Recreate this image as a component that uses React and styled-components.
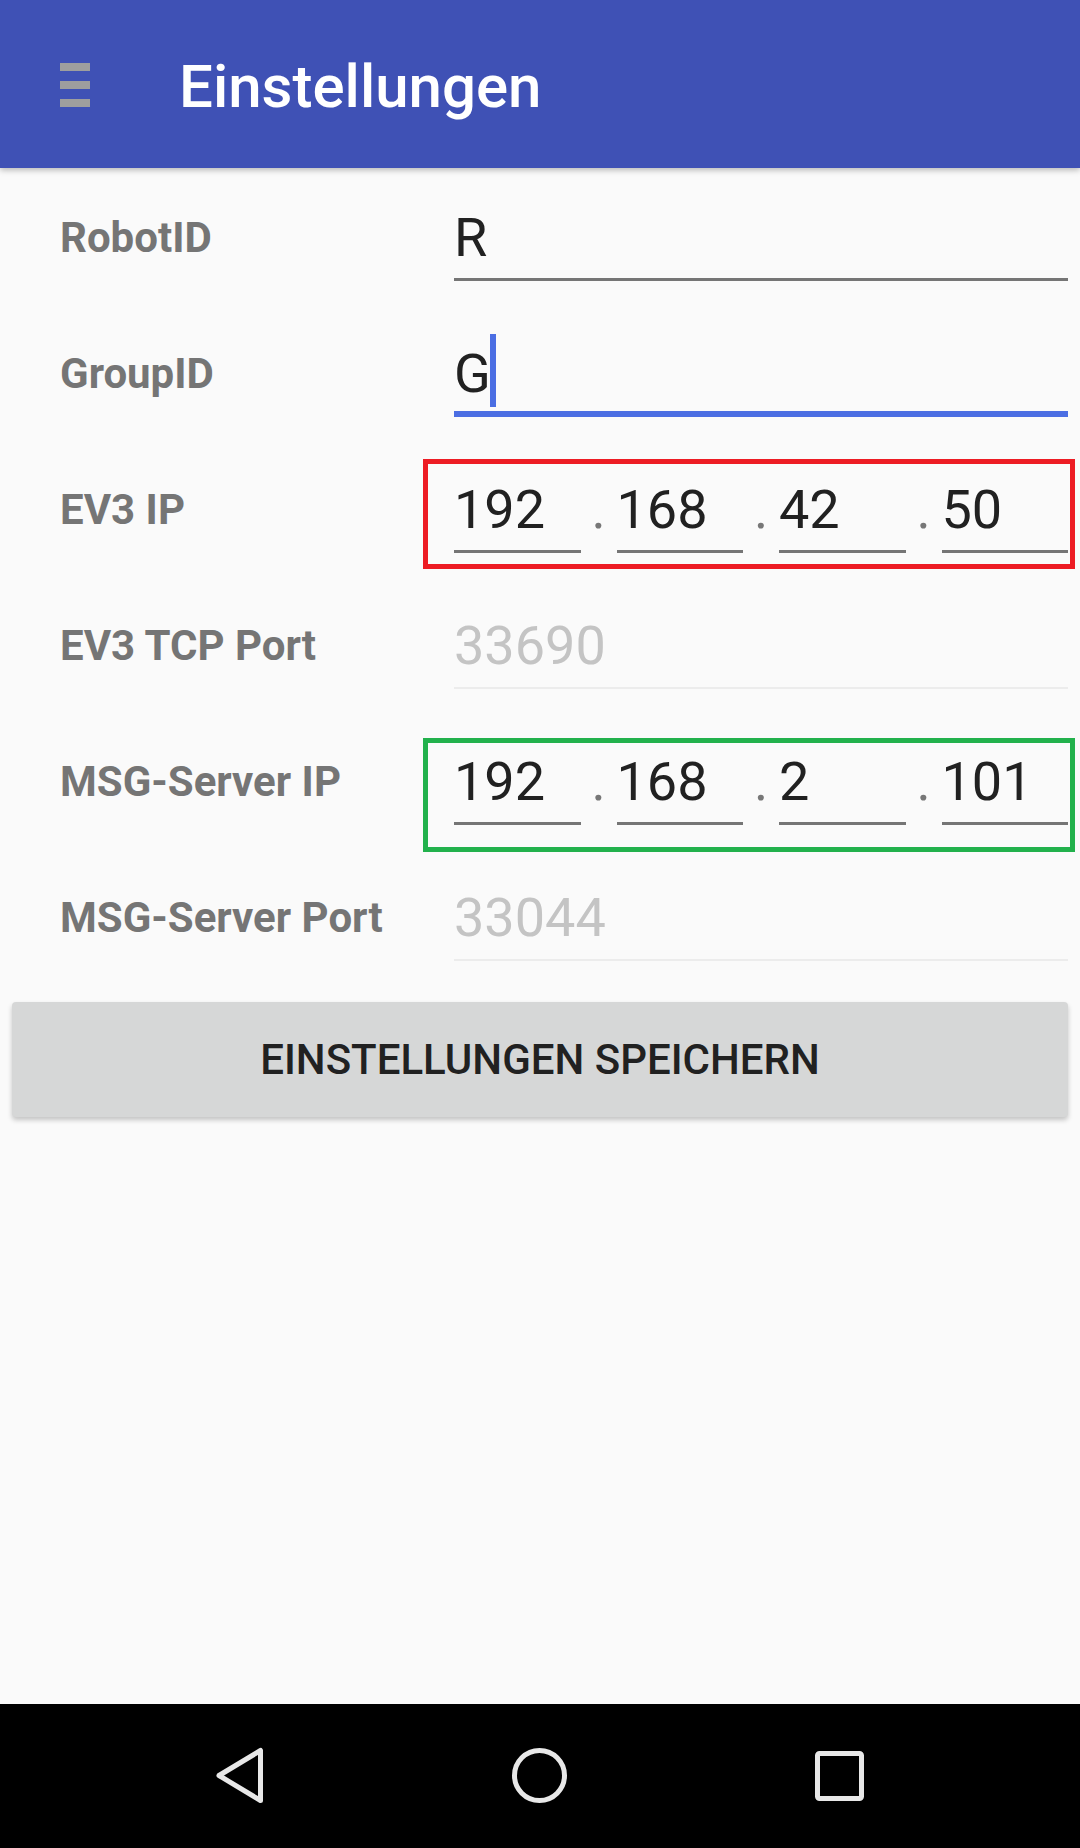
import React from 'react';
import styled, { createGlobalStyle } from 'styled-components';

const GlobalStyle = createGlobalStyle`
    html, body {
        margin: 0;
        padding: 0;
        background: #fafafa;
    }
    *, *::before, *::after { box-sizing: border-box; }
`;

const rows = [
    { label: 'RobotID', value: 'R' },
    { label: 'GroupID', value: 'G', focused: true },
    { label: 'EV3 IP', ip: ['192', '168', '42', '50'], frame: '#ed1c24', frameTop: 19, frameHeight: 110 },
    { label: 'EV3 TCP Port', hint: '33690' },
    { label: 'MSG-Server IP', ip: ['192', '168', '2', '101'], frame: '#22b14c', frameTop: 26, frameHeight: 114 },
    { label: 'MSG-Server Port', hint: '33044' },
];

const Settings = () => {
    return (
        <Page>
            <GlobalStyle />
            <AppBar>
                <MenuIcon>
                    <span />
                    <span />
                    <span />
                </MenuIcon>
                <Title>Einstellungen</Title>
            </AppBar>

            <Content>
                {rows.map((row) => (
                    <Row key={row.label}>
                        <Label>{row.label}</Label>
                        {row.ip ? (
                            <IpGroup $frame={row.frame} $frameTop={row.frameTop} $frameHeight={row.frameHeight}>
                                {row.ip.map((part, i) => (
                                    <React.Fragment key={i}>
                                        {i > 0 && <Dot>.</Dot>}
                                        <Field>{part}</Field>
                                    </React.Fragment>
                                ))}
                            </IpGroup>
                        ) : row.hint ? (
                            <Field $hint>{row.hint}</Field>
                        ) : (
                            <Field $focused={row.focused}>
                                {row.value}
                                {row.focused && <Cursor />}
                            </Field>
                        )}
                    </Row>
                ))}

                <SaveButton>Einstellungen speichern</SaveButton>
            </Content>

            <NavBar>
                {/* back */}
                <NavIcon viewBox="0 0 60 60">
                    <path d="M50.5 4.5 L50.5 54.5 L9 29.5 Z" fill="none" stroke="#e8e8e8" strokeWidth="5" strokeLinejoin="round" />
                </NavIcon>
                {/* home */}
                <NavIcon viewBox="0 0 60 60">
                    <circle cx="29.5" cy="29.5" r="25" fill="none" stroke="#e8e8e8" strokeWidth="5" />
                </NavIcon>
                {/* recents */}
                <NavIcon viewBox="0 0 60 60">
                    <rect x="7.5" y="7.5" width="44" height="45" rx="2" fill="none" stroke="#e8e8e8" strokeWidth="5" />
                </NavIcon>
            </NavBar>
        </Page>
    );
};

const Page = styled.div`
    height: 100vh;
    display: flex;
    flex-direction: column;
    background: #fafafa;
    font-family: Roboto, 'Noto Sans', sans-serif;
    overflow: hidden;
`;

const AppBar = styled.header`
    height: 168px;
    flex-shrink: 0;
    background: #3f51b5;
    display: flex;
    align-items: center;
    padding-left: 60px;
    box-shadow: 0 2px 6px rgba(0, 0, 0, 0.28);
    position: relative;
    z-index: 2;
`;

const MenuIcon = styled.div`
    width: 30px;
    display: flex;
    flex-direction: column;
    gap: 10px;
    margin-top: 2px;

    span {
        display: block;
        height: 8px;
        background: #9e9e9e;
    }
`;

const Title = styled.h1`
    margin: 5px 0 0 89px;
    font-size: 60px;
    line-height: 60px;
    font-weight: 500;
    color: #fff;
`;

const Content = styled.main`
    flex: 1;
    display: flex;
    flex-direction: column;
`;

const Row = styled.div`
    height: 136px;
    display: flex;
    align-items: flex-start;
    padding: 0 12px 0 60px;
`;

const Label = styled.div`
    width: 394px;
    flex-shrink: 0;
    margin-top: 49px;
    font-size: 42px;
    line-height: 42px;
    font-weight: 700;
    color: #757575;
    white-space: nowrap;
`;

const Field = styled.div`
    position: relative;
    flex: 1;
    min-width: 0;
    height: 113px;
    padding-top: 43px;
    font-size: 54px;
    line-height: 54px;
    color: ${props => props.$hint ? '#c4c4c4' : '#212121'};
    border-bottom: ${props =>
        props.$focused ? '6px solid #4b6ee3'
        : props.$hint ? '2px solid #ececec'
        : '3px solid #757575'};
    white-space: nowrap;
`;

const Cursor = styled.span`
    position: absolute;
    left: 36px;
    top: 30px;
    width: 6px;
    height: 73px;
    background: #4b6ee3;
`;

const IpGroup = styled.div`
    position: relative;
    flex: 1;
    display: flex;
    align-items: flex-start;

    &::after {
        content: '';
        position: absolute;
        left: -31px;
        right: -7px;
        top: ${props => props.$frameTop}px;
        height: ${props => props.$frameHeight}px;
        border: 5px solid ${props => props.$frame};
        pointer-events: none;
    }
`;

const Dot = styled.span`
    width: 36px;
    flex-shrink: 0;
    padding-top: 43px;
    font-size: 54px;
    line-height: 54px;
    text-align: center;
    color: #777;
`;

const SaveButton = styled.button`
    margin: 18px 12px 0;
    height: 115px;
    border: none;
    border-radius: 4px;
    background: #d6d7d7;
    box-shadow: 0 3px 5px rgba(0, 0, 0, 0.22);
    font-family: Roboto, 'Noto Sans', sans-serif;
    font-size: 42px;
    font-weight: 500;
    color: #212121;
    text-transform: uppercase;
    display: flex;
    align-items: center;
    justify-content: center;
`;

const NavBar = styled.nav`
    height: 144px;
    flex-shrink: 0;
    background: #000;
    display: flex;
    align-items: center;
    justify-content: center;
    gap: 240px;
`;

const NavIcon = styled.svg`
    width: 60px;
    height: 60px;
`;

export default Settings;
